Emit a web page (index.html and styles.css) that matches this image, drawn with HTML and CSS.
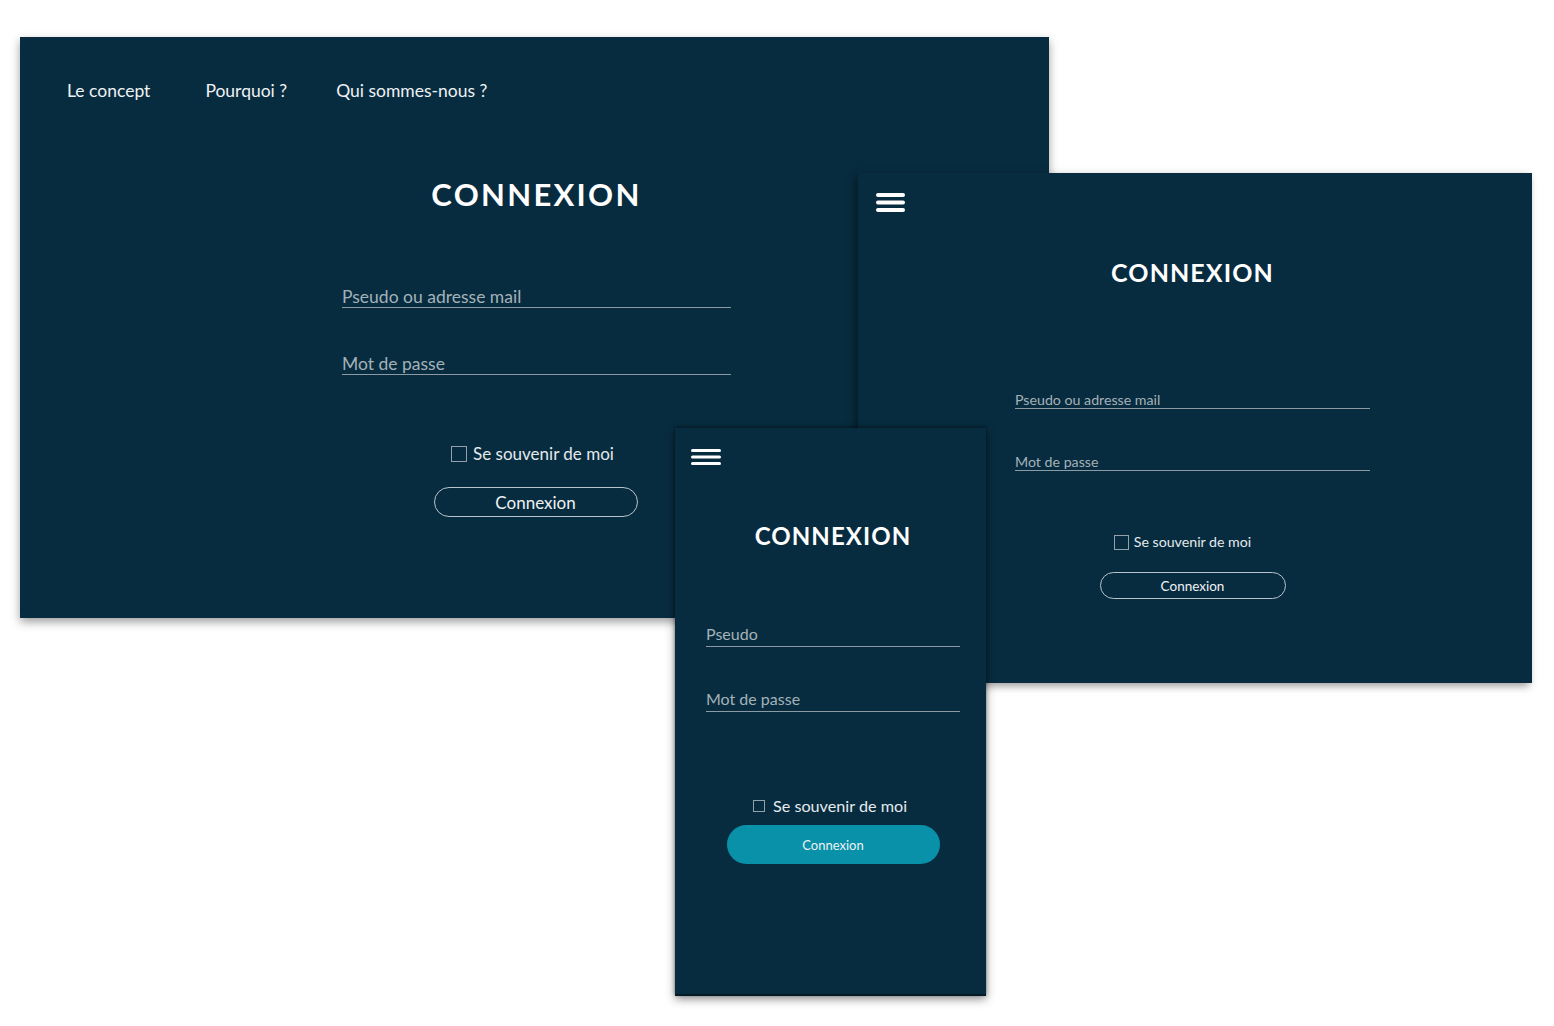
FILE: index.html
```html
<!DOCTYPE html>
<html lang="fr">
<head>
<meta charset="utf-8">
<title>Connexion – maquettes</title>
<link rel="stylesheet" href="styles.css">
</head>
<body>
<div class="canvas">
  <section class="screen desktop">
    <nav class="nav">
      <a class="nav-link">Le concept</a>
      <a class="nav-link">Pourquoi ?</a>
      <a class="nav-link">Qui sommes-nous ?</a>
    </nav>
    <div class="content">
      <h1 class="title">CONNEXION</h1>
      <div class="field f1"><span class="label">Pseudo ou adresse mail</span></div>
      <div class="field f2"><span class="label">Mot de passe</span></div>
      <label class="remember"><span class="box"></span><span>Se souvenir de moi</span></label>
      <div class="btn">Connexion</div>
    </div>
  </section>

  <section class="screen tablet">
    <svg class="burger" viewBox="0 0 29 19" width="29" height="19"><rect x="0" y="0" width="29" height="4" rx="2" fill="#fff"/><rect x="0" y="7.5" width="29" height="4" rx="2" fill="#fff"/><rect x="0" y="15" width="29" height="4" rx="2" fill="#fff"/></svg>
    <div class="content">
      <h1 class="title">CONNEXION</h1>
      <div class="field f1"><span class="label">Pseudo ou adresse mail</span></div>
      <div class="field f2"><span class="label">Mot de passe</span></div>
      <label class="remember"><span class="box"></span><span>Se souvenir de moi</span></label>
      <div class="btn">Connexion</div>
    </div>
  </section>

  <section class="screen mobile">
    <svg class="burger" viewBox="0 0 30 16" width="30" height="16"><rect x="0" y="0" width="30" height="3" rx="1.5" fill="#fff"/><rect x="0" y="6.5" width="30" height="3" rx="1.5" fill="#fff"/><rect x="0" y="13" width="30" height="3" rx="1.5" fill="#fff"/></svg>
    <div class="content">
      <h1 class="title">CONNEXION</h1>
      <div class="field f1"><span class="label">Pseudo</span></div>
      <div class="field f2"><span class="label">Mot de passe</span></div>
      <label class="remember"><span class="box"></span><span>Se souvenir de moi</span></label>
      <div class="btn">Connexion</div>
    </div>
  </section>
</div>
</body>
</html>
```

FILE: styles.css
```css
* { box-sizing: border-box; }
html, body { margin: 0; padding: 0; background: #ffffff; }
body { font-family: Lato, "Open Sans", sans-serif; color: #e6ecef; }

.canvas { position: relative; width: 1554px; height: 1026px; overflow: hidden; background: #fff; }

.screen {
  position: absolute;
  background: #082c3f;
  box-shadow: 0 4px 9px rgba(0, 0, 0, 0.38);
}
.content { display: flex; flex-direction: column; align-items: center; }
.title { margin: 0; font-weight: 700; color: #ffffff; text-align: center; }
.field { border-bottom: 1px solid #8c9ba3; display: flex; }
.label { color: #a3b2b9; }
.remember { display: flex; align-items: center; color: #e4eaed; }
.box { display: block; border: 1px solid #93a2aa; }
.btn { display: flex; align-items: center; justify-content: center; border-radius: 999px; color: #eef2f4; }

/* Desktop */
.desktop { left: 20px; top: 37px; width: 1029px; height: 581px; }
.desktop .nav { display: flex; gap: 55px; padding: 44px 0 0 47px; height: 64px; }
.desktop .nav-link { font-size: 17.5px; line-height: 20px; color: #eef2f4; }
.desktop .nav-link:nth-child(3) { margin-left: -6px; }
.desktop .content { padding-left: 4px; }
.desktop .title { font-size: 31px; line-height: 40px; letter-spacing: 2.3px; margin-top: 73px; }
.desktop .field { width: 389px; font-size: 17.5px; line-height: 20px; }
.desktop .f1 { margin-top: 73px; }
.desktop .f2 { margin-top: 46px; }
.desktop .remember { margin-top: 69px; font-size: 17px; line-height: 20px; gap: 6px; margin-left: -8px; }
.desktop .box { width: 16px; height: 16px; }
.desktop .btn { margin-top: 23px; width: 204px; height: 30px; border: 1px solid #b8c4ca; font-size: 17px; margin-left: -2px; }

/* Tablet */
.tablet { left: 858px; top: 173px; width: 674px; height: 510px; box-shadow: -3px 3px 8px rgba(0, 0, 0, 0.4); }
.tablet .burger { display: block; margin: 20px 0 0 18px; }
.tablet .content { padding-right: 5px; }
.tablet .title { font-size: 25px; line-height: 30px; letter-spacing: 1.1px; margin-top: 45px; }
.tablet .field { width: 355px; font-size: 14.2px; line-height: 16px; }
.tablet .f1 { margin-top: 105px; }
.tablet .f2 { margin-top: 45px; }
.tablet .remember { margin-top: 63px; font-size: 14.2px; line-height: 16px; gap: 5px; margin-left: -20px; }
.tablet .box { width: 15px; height: 15px; }
.tablet .btn { margin-top: 22px; width: 186px; height: 27px; border: 1px solid #b8c4ca; font-size: 13.5px; }

/* Mobile */
.mobile { left: 675px; top: 428px; width: 311px; height: 568px; border-bottom: 2px solid #041a26; box-shadow: 0 3px 9px rgba(0, 0, 0, 0.45), 0 -1px 3px rgba(0, 0, 0, 0.4); }
.mobile .burger { display: block; margin: 21px 0 0 16px; }
.mobile .content { padding-left: 5px; }
.mobile .title { font-size: 24px; line-height: 30px; letter-spacing: 1.1px; margin-top: 56px; }
.mobile .field { width: 254px; font-size: 16px; line-height: 18px; padding-bottom: 3px; }
.mobile .f1 { margin-top: 74px; }
.mobile .f2 { margin-top: 43px; }
.mobile .remember { margin-top: 85px; font-size: 16.2px; line-height: 18px; gap: 8px; margin-left: -6px; }
.mobile .box { width: 12px; height: 12px; }
.mobile .btn { margin-top: 10px; width: 213px; height: 39px; background: #0891a8; font-size: 13px; }
```
